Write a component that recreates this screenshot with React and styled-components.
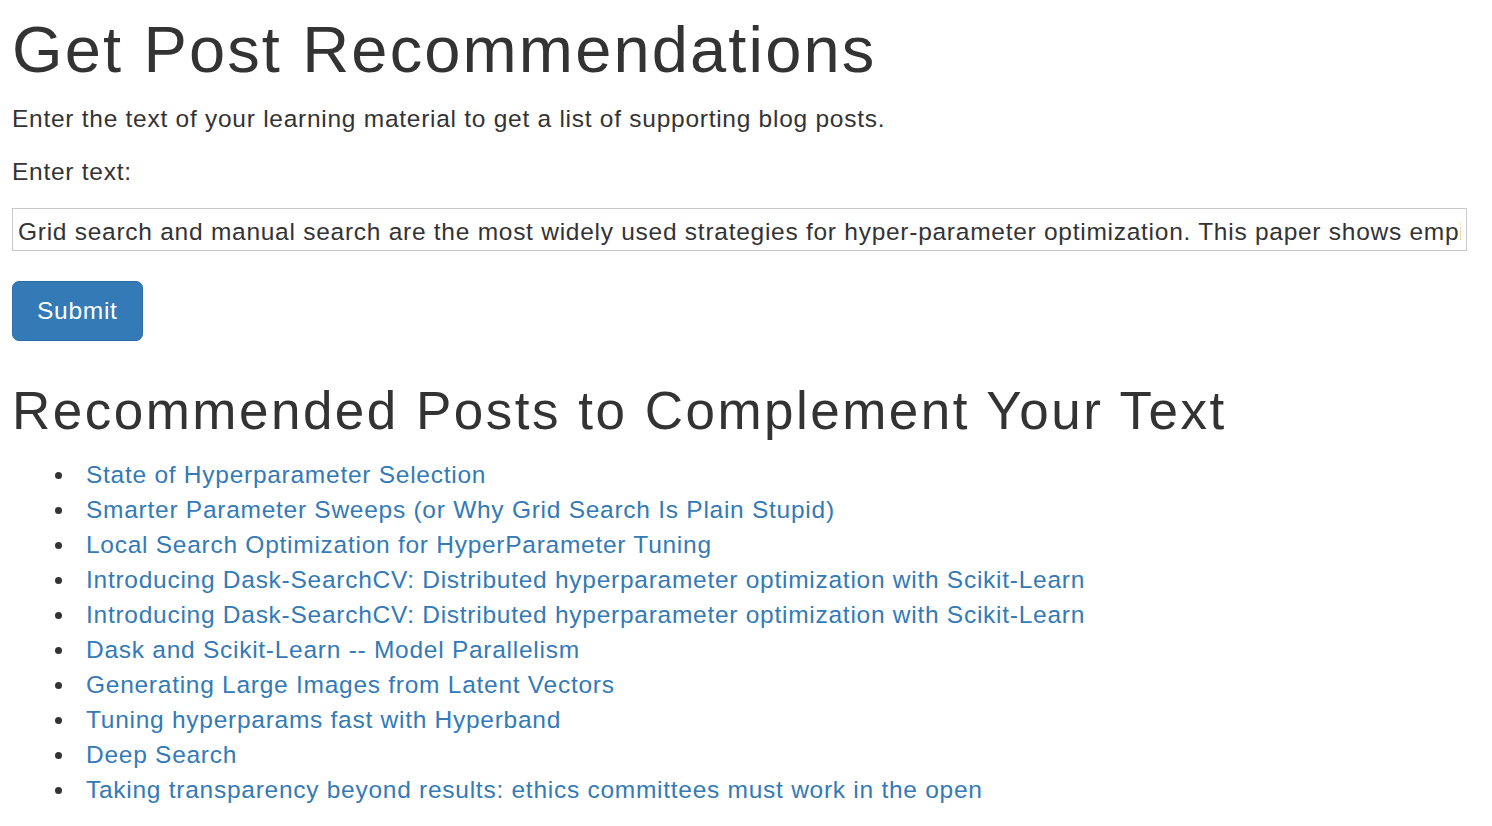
import React from 'react';
import styled, { createGlobalStyle } from 'styled-components';

const GlobalStyle = createGlobalStyle`
  html, body {
    margin: 0;
    padding: 0;
    background: #ffffff;
  }
  body {
    font-family: "Liberation Sans", Arial, Helvetica, sans-serif;
    font-size: 24.5px;
    line-height: 35px;
    color: #333333;
    letter-spacing: 0.03em;
  }
  *, *::before, *::after {
    box-sizing: border-box;
  }
`;

const Page = styled.main`
  padding: 0 25px 20px 12px;
`;

const Title = styled.h1`
  margin: 14px 0 15.5px;
  font-size: 65px;
  line-height: 1.1;
  font-weight: 400;
  letter-spacing: 0.033em;
  color: #333333;
`;

const Lead = styled.p`
  margin: 0 0 18px;
`;

const Form = styled.form`
  display: flex;
  flex-direction: column;
  align-items: flex-start;
`;

const Label = styled.label`
  display: block;
  margin-bottom: 19px;
`;

const TextInput = styled.input`
  width: 100%;
  height: 43px;
  margin: 0;
  padding: 4px 5px 0;
  border: 1px solid #c9c9c9;
  border-radius: 0;
  font-family: inherit;
  font-size: 24.5px;
  letter-spacing: 0.03em;
  color: #333333;
  background: #ffffff;
  outline: none;
`;

const SubmitButton = styled.button`
  margin-top: 30px;
  padding: 11.25px 24px;
  border: 1px solid #2e6da4;
  border-radius: 7px;
  background: #337ab7;
  color: #ffffff;
  font-family: inherit;
  font-size: 24.5px;
  line-height: 35px;
  letter-spacing: 0.03em;
  cursor: pointer;
`;

const SectionTitle = styled.h2`
  margin: 41px 0 17.5px;
  font-size: 53px;
  line-height: 1.1;
  font-weight: 400;
  letter-spacing: 0.047em;
  color: #333333;
`;

const PostList = styled.ul`
  margin: 0;
  padding-left: 42.5px;
  list-style: none;
`;

const PostItem = styled.li`
  display: flex;
  align-items: flex-start;
  line-height: 35px;

  &::before {
    content: "";
    flex: none;
    width: 7.5px;
    height: 7.5px;
    margin-top: 14.5px;
    margin-right: 24px;
    border-radius: 50%;
    background: #333333;
  }
`;

const PostLink = styled.a`
  color: #337ab7;
  text-decoration: none;
  &:hover {
    text-decoration: underline;
  }
`;

const posts = [
  'State of Hyperparameter Selection',
  'Smarter Parameter Sweeps (or Why Grid Search Is Plain Stupid)',
  'Local Search Optimization for HyperParameter Tuning',
  'Introducing Dask-SearchCV: Distributed hyperparameter optimization with Scikit-Learn',
  'Introducing Dask-SearchCV: Distributed hyperparameter optimization with Scikit-Learn',
  'Dask and Scikit-Learn -- Model Parallelism',
  'Generating Large Images from Latent Vectors',
  'Tuning hyperparams fast with Hyperband',
  'Deep Search',
  'Taking transparency beyond results: ethics committees must work in the open',
];

const inputText =
  'Grid search and manual search are the most widely used strategies for hyper-parameter optimization. This paper shows empirically and theoretically that randomly chosen trials are more efficient for hyper-parameter optimization than trials on a grid.';

export default function App() {
  return (
    <>
      <GlobalStyle />
      <Page>
        <Title>Get Post Recommendations</Title>
        <Lead>Enter the text of your learning material to get a list of supporting blog posts.</Lead>
        <Form onSubmit={(e) => e.preventDefault()}>
          <Label htmlFor="text">Enter text:</Label>
          <TextInput id="text" type="text" defaultValue={inputText} />
          <SubmitButton type="submit">Submit</SubmitButton>
        </Form>
        <SectionTitle>Recommended Posts to Complement Your Text</SectionTitle>
        <PostList>
          {posts.map((p, i) => (
            <PostItem key={i}>
              <PostLink href="#">{p}</PostLink>
            </PostItem>
          ))}
        </PostList>
      </Page>
    </>
  );
}
